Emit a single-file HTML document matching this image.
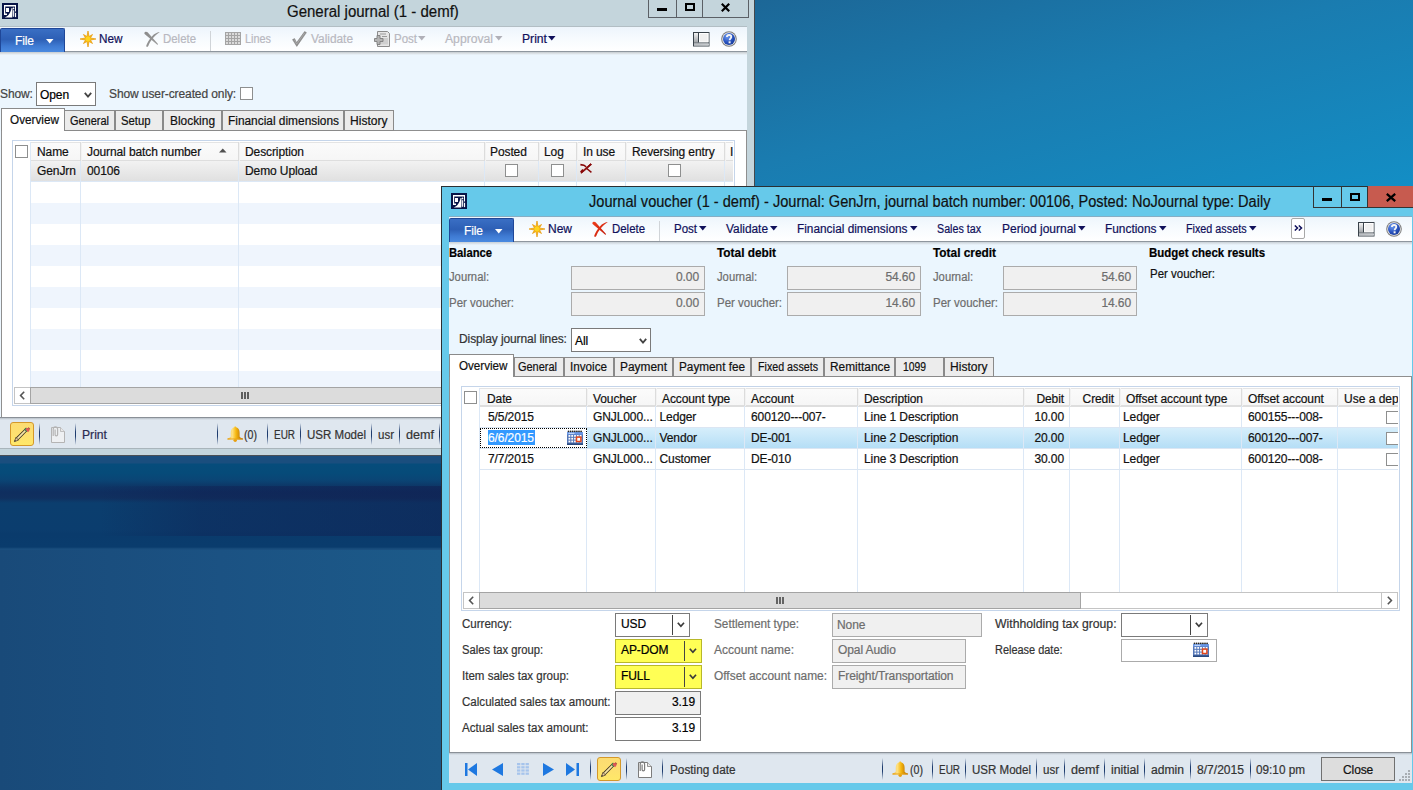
<!DOCTYPE html><html><head><meta charset="utf-8"><style>
html,body{margin:0;padding:0;}
body{width:1413px;height:790px;overflow:hidden;position:relative;font-family:"Liberation Sans",sans-serif;font-size:12px;}
div,span,svg{position:absolute;box-sizing:border-box;}
.t{white-space:nowrap;-webkit-text-stroke:0.2px currentColor;}
</style></head><body>
<div style="left:0;top:0;width:1413px;height:790px;background:#1a6a9c;"></div>
<div style="left:755px;top:0;width:658px;height:186px;background:linear-gradient(to bottom right,#1c6797 0%,#1a7cb0 45%,#138ec5 100%);"></div>
<div style="left:0;top:456px;width:441px;height:334px;background:linear-gradient(90deg,#194a79 0%,#1b5283 50%,#1c5a89 100%);"></div>
<div style="left:0;top:456px;width:441px;height:94px;background:linear-gradient(180deg,#1a4e7e 0px,#1a4e7e 7px,#064c7b 8px,#064b79 17px,#0a4575 24px,#0e3565 31px,#0f2e5f 36px,#10305f 42px,#0b3e6e 47px,#0b3d6e 74px,#0a3b6c 78px,#0a3c6d 91px,#1a4e7e 93px);"></div>
<div style="left:100px;top:486px;width:341px;height:50px;background:linear-gradient(90deg,rgba(16,30,80,0) 0%,rgba(16,30,80,0.35) 30%,rgba(16,30,80,0.5) 100%);"></div>
<div style="left:0px;top:0px;width:755px;height:456px;background:#c4d5dc;border-right:1px solid #45484c;border-bottom:1px solid #4a4f55;"></div>
<div style="left:0px;top:448px;width:747px;height:1px;background:#a9b5bb;"></div>
<svg style="left:2px;top:3px" width="16" height="16" viewBox="0 0 16 16"><rect width="16" height="16" fill="#071447"/><path d="M2 2H14V8.6H13V3.4H3.2V10.6H5V11.9H2Z" fill="#fff"/><rect x="4" y="5" width="3" height="4" fill="#fff"/><path d="M2.6 14.6C6 13.6 8.6 10.4 9.5 5.1L10.4 5.1C10.6 8.5 10.5 11.8 10.3 14.4Z" fill="#fff"/><circle cx="11.5" cy="5.4" r="0.85" fill="#fff"/><rect x="11.1" y="7.2" width="1.1" height="6.6" fill="#fff"/><rect x="13" y="9.8" width="1.1" height="4.3" fill="#fff"/></svg>
<span class="t" style="left:287px;top:4px;font-size:16px;line-height:16px;color:#111;transform:scaleX(0.9381);transform-origin:left top;">General journal (1 - demf)</span>
<div style="left:0px;top:26px;width:747px;height:1px;background:#b2bec4;"></div>
<div style="left:648px;top:0px;width:29px;height:18px;border:1px solid #5b6066;border-top:none;"></div>
<div style="left:676px;top:0px;width:27px;height:18px;border:1px solid #5b6066;border-top:none;"></div>
<div style="left:702px;top:0px;width:47px;height:18px;border:1px solid #5b6066;border-top:none;"></div>
<div style="left:657px;top:8px;width:10px;height:3px;background:#000;"></div>
<div style="left:685px;top:3px;width:10px;height:8px;border:2px solid #000;"></div>
<svg style="left:721px;top:3px" width="9" height="9" viewBox="0 0 9 9"><path d="M0.8 0.8L8.2 8.2M8.2 0.8L0.8 8.2" stroke="#000" stroke-width="2.2"/></svg>
<div style="left:0px;top:27px;width:747px;height:24px;background:linear-gradient(180deg,#edf5fc 0%,#f7fbfe 50%,#ffffff 100%);"></div>
<div style="left:0px;top:51px;width:747px;height:1px;background:#8e969e;"></div>
<div style="left:0px;top:28px;width:65px;height:24px;background:linear-gradient(180deg,#3a6fc4 0%,#2d5fb5 45%,#3f7bd3 75%,#4a8ae0 100%);border:1px solid #1f4798;border-bottom:none;border-radius:2px 2px 0 0;"></div>
<span class="t" style="left:15px;top:35px;font-size:12px;line-height:12px;color:#ffffff;letter-spacing:-0.1px;">File</span>
<svg style="left:46px;top:39px" width="8" height="5"><path d="M0 0H7.5L3.75 4.5Z" fill="#fff"/></svg>
<svg style="left:79px;top:30px" width="18" height="18" viewBox="-9 -9 18 18"><defs><radialGradient id="sg88" r="0.6"><stop offset="0" stop-color="#ffd820"/><stop offset="0.45" stop-color="#f6b612"/><stop offset="1" stop-color="#e58c00"/></radialGradient></defs><polygon points="0.00,-8.00 1.03,-2.49 4.53,-4.53 2.49,-1.03 8.00,0.00 2.49,1.03 4.53,4.53 1.03,2.49 0.00,8.00 -1.03,2.49 -4.53,4.53 -2.49,1.03 -8.00,0.00 -2.49,-1.03 -4.53,-4.53 -1.03,-2.49" fill="url(#sg88)" stroke="#e89a08" stroke-width="0.7" stroke-linejoin="round"/><circle r="2.4" fill="#ffd41c"/></svg>
<span class="t" style="left:99px;top:33px;font-size:12px;line-height:12px;color:#10105a;transform:scaleX(0.9785);transform-origin:left top;">New</span>
<svg style="left:144px;top:31px" width="17" height="17" viewBox="0 0 17 17"><defs><linearGradient id="xg144" x1="0" x2="1" y1="0" y2="1"><stop offset="0" stop-color="#8a8a8a"/><stop offset="1" stop-color="#9c9c9c"/></linearGradient></defs><path d="M0.4 1.9C1 0.5 2.6 0.6 3.6 1.3L14 12.9C14.1 13.6 13.4 13.9 13 13.4L0.9 3.3C0.4 2.9 0.3 2.4 0.4 1.9Z" fill="url(#xg144)"/><path d="M15.8 0.9C11 1.6 8 4.6 5.5 8.6C3.8 11.1 2.8 13.1 2.2 15.1C2.5 16.3 3.9 16.1 4.3 15.1C5.1 12.6 6.6 10.1 8.6 7.6C10.6 5.1 13.1 2.6 15.8 0.9Z" fill="url(#xg144)"/></svg>
<span class="t" style="left:163px;top:33px;font-size:12px;line-height:12px;color:#b8b8c0;transform:scaleX(0.9514);transform-origin:left top;">Delete</span>
<div style="left:210px;top:31px;width:1px;height:20px;background:#d0d4d8;"></div>
<svg style="left:225px;top:32px" width="16" height="13" viewBox="0 0 16 13"><rect width="16" height="13" fill="#a4a4a4"/><rect x="1" y="1" width="2" height="2" fill="#dadada"/><rect x="1" y="4" width="2" height="2" fill="#dadada"/><rect x="1" y="7" width="2" height="2" fill="#dadada"/><rect x="1" y="10" width="2" height="2" fill="#dadada"/><rect x="4" y="1" width="2" height="2" fill="#dadada"/><rect x="4" y="4" width="2" height="2" fill="#dadada"/><rect x="4" y="7" width="2" height="2" fill="#dadada"/><rect x="4" y="10" width="2" height="2" fill="#dadada"/><rect x="7" y="1" width="2" height="2" fill="#dadada"/><rect x="7" y="4" width="2" height="2" fill="#dadada"/><rect x="7" y="7" width="2" height="2" fill="#dadada"/><rect x="7" y="10" width="2" height="2" fill="#dadada"/><rect x="10" y="1" width="2" height="2" fill="#dadada"/><rect x="10" y="4" width="2" height="2" fill="#dadada"/><rect x="10" y="7" width="2" height="2" fill="#dadada"/><rect x="10" y="10" width="2" height="2" fill="#dadada"/><rect x="13" y="1" width="2" height="2" fill="#dadada"/><rect x="13" y="4" width="2" height="2" fill="#dadada"/><rect x="13" y="7" width="2" height="2" fill="#dadada"/><rect x="13" y="10" width="2" height="2" fill="#dadada"/></svg>
<span class="t" style="left:245px;top:33px;font-size:12px;line-height:12px;color:#b8b8c0;transform:scaleX(0.9063);transform-origin:left top;">Lines</span>
<svg style="left:292px;top:31px" width="15" height="16" viewBox="0 0 15 16"><path d="M0.5 8.6L2.6 7.6L4.6 11.6L12.6 0.6L14.4 1.6L4.8 15.4Z" fill="#8e8e8e" stroke="#7a7a7a" stroke-width="0.5"/><path d="M2.4 8.6L4.6 13.2L12.8 1.7" stroke="#b8b8b8" stroke-width="0.6" fill="none"/></svg>
<span class="t" style="left:311px;top:33px;font-size:12px;line-height:12px;color:#b8b8c0;transform:scaleX(0.9890);transform-origin:left top;">Validate</span>
<svg style="left:374px;top:31px" width="17" height="16" viewBox="0 0 17 16"><path d="M3.5 0.5H13.5L15.5 2.5V15.5H3.5Z" fill="#e6e6e6" stroke="#8c8c8c" stroke-width="1"/><path d="M6 3H12M8 5.5H13" stroke="#9a9a9a" stroke-width="1"/><rect x="6" y="7" width="8" height="6.5" fill="#cfcfcf"/><path d="M3 4.5H6V7.5H9V10.5H6V13.5H3V10.5H0.5V7.5H3Z" fill="#b4b4b4" stroke="#7e7e7e" stroke-width="0.9"/></svg>
<span class="t" style="left:394px;top:33px;font-size:12px;line-height:12px;color:#b8b8c0;transform:scaleX(0.9583);transform-origin:left top;">Post</span>
<svg style="left:418px;top:36px" width="8" height="5"><path d="M0 0H7.5L3.75 4.5Z" fill="#b0b0b8"/></svg>
<span class="t" style="left:445px;top:33px;font-size:12px;line-height:12px;color:#b8b8c0;transform:scaleX(1.0135);transform-origin:left top;">Approval</span>
<svg style="left:495px;top:36px" width="8" height="5"><path d="M0 0H7.5L3.75 4.5Z" fill="#b0b0b8"/></svg>
<span class="t" style="left:522px;top:33px;font-size:12px;line-height:12px;color:#10105a;transform:scaleX(1.0133);transform-origin:left top;">Print</span>
<svg style="left:548px;top:36px" width="8" height="5"><path d="M0 0H7.5L3.75 4.5Z" fill="#10105a"/></svg>
<svg style="left:693px;top:32px" width="17" height="15" viewBox="0 0 17 15"><defs><linearGradient id="lg693" x1="0" x2="0" y1="0" y2="1"><stop offset="0" stop-color="#f4f4f4"/><stop offset="1" stop-color="#9ea2a6"/></linearGradient><linearGradient id="lh693" x1="0" x2="1"><stop offset="0" stop-color="#b8bcc0"/><stop offset="1" stop-color="#c8ccd0"/></linearGradient></defs><rect x="0.5" y="0.5" width="15.5" height="13.5" fill="#f2f2f2" stroke="#39424a" stroke-width="1"/><rect x="1" y="1" width="4" height="9.5" fill="url(#lg693)"/><rect x="5" y="1" width="1" height="9.5" fill="#39424a"/><rect x="6" y="1" width="9.5" height="9.5" fill="#fff"/><rect x="7" y="2" width="7.5" height="7.5" fill="#f0f0f0"/><rect x="1" y="10.5" width="15" height="1" fill="#39424a"/><rect x="1" y="11.5" width="15" height="2" fill="url(#lh693)"/></svg>
<svg style="left:721px;top:31px" width="16" height="16" viewBox="0 0 16 16"><defs><radialGradient id="hg729" cx="0.35" cy="0.3" r="0.75"><stop offset="0" stop-color="#6f9cf0"/><stop offset="0.6" stop-color="#2a54c0"/><stop offset="1" stop-color="#163a9a"/></radialGradient></defs><circle cx="8" cy="8" r="7.8" fill="#7c7c7c"/><circle cx="8" cy="8" r="6.8" fill="#ececec"/><circle cx="8" cy="8" r="6" fill="url(#hg729)"/><path d="M5.9 6.1C5.9 4.7 6.8 4 8.1 4C9.4 4 10.3 4.8 10.3 5.9C10.3 7.2 8.6 7.5 8.6 9.3" stroke="#f4f4f4" stroke-width="1.8" fill="none"/><rect x="7.6" y="10.3" width="2" height="2" fill="#f4f4f4"/></svg>
<div style="left:0px;top:52px;width:747px;height:366px;background:#ecf6fe;"></div>
<div style="left:0px;top:52px;width:747px;height:3px;background:linear-gradient(180deg,#c6cbcf,#dfe5ea 60%,#ebf5fd);"></div>
<span class="t" style="left:0px;top:88px;font-size:12px;line-height:12px;color:#444;letter-spacing:-0.1px;">Show:</span>
<div style="left:36px;top:82px;width:60px;height:24px;background:#fff;border:1px solid #7a7a7a;"></div>
<span class="t" style="left:40px;top:89px;font-size:12px;line-height:12px;color:#000;letter-spacing:-0.1px;">Open</span>
<svg style="left:84px;top:92px" width="8" height="6"><path d="M0.8 0.8L4 4.5L7.2 0.8" stroke="#444" stroke-width="1.8" fill="none"/></svg>
<span class="t" style="left:109px;top:88px;font-size:12px;line-height:12px;color:#444;letter-spacing:-0.1px;">Show user-created only:</span>
<div style="left:240px;top:87px;width:13px;height:13px;background:#fff;border:1px solid #8e8f8f;"></div>
<div style="left:1px;top:130px;width:746px;height:288px;background:#fff;border:1px solid #8f8f8f;border-right:none;border-bottom:none;"></div>
<div style="left:746px;top:130px;width:1px;height:288px;background:#8f8f8f;"></div>
<div style="left:64px;top:110px;width:51px;height:21px;background:#ececec;border:1px solid #8a8a8a;"></div>
<span class="t" style="left:69.5px;top:115px;font-size:12px;line-height:12px;color:#111;transform:scaleX(0.9136);transform-origin:left top;">General</span>
<div style="left:115px;top:110px;width:48px;height:21px;background:#ececec;border:1px solid #8a8a8a;"></div>
<span class="t" style="left:121px;top:115px;font-size:12px;line-height:12px;color:#111;transform:scaleX(0.9412);transform-origin:left top;">Setup</span>
<div style="left:163px;top:110px;width:59px;height:21px;background:#ececec;border:1px solid #8a8a8a;"></div>
<span class="t" style="left:169.5px;top:115px;font-size:12px;line-height:12px;color:#111;transform:scaleX(0.9921);transform-origin:left top;">Blocking</span>
<div style="left:222px;top:110px;width:122px;height:21px;background:#ececec;border:1px solid #8a8a8a;"></div>
<span class="t" style="left:227.5px;top:115px;font-size:12px;line-height:12px;color:#111;transform:scaleX(0.9905);transform-origin:left top;">Financial dimensions</span>
<div style="left:344px;top:110px;width:50px;height:21px;background:#ececec;border:1px solid #8a8a8a;"></div>
<span class="t" style="left:350px;top:115px;font-size:12px;line-height:12px;color:#111;transform:scaleX(1.0042);transform-origin:left top;">History</span>
<div style="left:1px;top:108px;width:64px;height:23px;background:#fff;border:1px solid #8a8a8a;border-bottom:none;"></div>
<span class="t" style="left:10px;top:114px;font-size:12px;line-height:12px;color:#111;transform:scaleX(0.9797);transform-origin:left top;">Overview</span>
<div style="left:12px;top:140px;width:723px;height:266px;background:#fff;border:1px solid #c5d5ea;"></div>
<div style="left:31px;top:142px;width:702px;height:20px;background:linear-gradient(180deg,#fbfbfb,#f6f6f6);border-top:1px solid #e4e4e4;border-bottom:2px solid #dedede;"></div>
<div style="left:15px;top:145px;width:13px;height:13px;background:#fff;border:1px solid #8e8f8f;"></div>
<div style="left:80px;top:142px;width:2px;height:19px;background:#f2f2f2;border-left:1px solid #dcdcdc;"></div>
<div style="left:238px;top:142px;width:2px;height:19px;background:#f2f2f2;border-left:1px solid #dcdcdc;"></div>
<div style="left:484px;top:142px;width:2px;height:19px;background:#f2f2f2;border-left:1px solid #dcdcdc;"></div>
<div style="left:538px;top:142px;width:2px;height:19px;background:#f2f2f2;border-left:1px solid #dcdcdc;"></div>
<div style="left:576px;top:142px;width:2px;height:19px;background:#f2f2f2;border-left:1px solid #dcdcdc;"></div>
<div style="left:625px;top:142px;width:2px;height:19px;background:#f2f2f2;border-left:1px solid #dcdcdc;"></div>
<div style="left:724px;top:142px;width:2px;height:19px;background:#f2f2f2;border-left:1px solid #dcdcdc;"></div>
<span class="t" style="left:37px;top:146px;font-size:12px;line-height:12px;color:#111;letter-spacing:-0.1px;">Name</span>
<span class="t" style="left:87px;top:146px;font-size:12px;line-height:12px;color:#111;letter-spacing:-0.1px;">Journal batch number</span>
<svg style="left:219px;top:148px" width="8" height="5"><path d="M0 4.5H7.5L3.75 0.5Z" fill="#505050"/></svg>
<span class="t" style="left:245px;top:146px;font-size:12px;line-height:12px;color:#111;letter-spacing:-0.1px;">Description</span>
<span class="t" style="left:490px;top:146px;font-size:12px;line-height:12px;color:#111;letter-spacing:-0.1px;">Posted</span>
<span class="t" style="left:544px;top:146px;font-size:12px;line-height:12px;color:#111;letter-spacing:-0.1px;">Log</span>
<span class="t" style="left:583px;top:146px;font-size:12px;line-height:12px;color:#111;letter-spacing:-0.1px;">In use</span>
<span class="t" style="left:632px;top:146px;font-size:12px;line-height:12px;color:#111;letter-spacing:-0.1px;">Reversing entry</span>
<span class="t" style="left:730px;top:146px;font-size:12px;line-height:12px;color:#111;letter-spacing:-0.1px;">I</span>
<div style="left:31px;top:161px;width:702px;height:20px;background:linear-gradient(180deg,#f2f2f2,#e0e0e0);"></div>
<div style="left:31px;top:181px;width:702px;height:1px;background:#dce8f6;"></div>
<div style="left:31px;top:182px;width:702px;height:21px;background:#ffffff;"></div>
<div style="left:31px;top:203px;width:702px;height:21px;background:#eff5fd;"></div>
<div style="left:31px;top:224px;width:702px;height:21px;background:#ffffff;"></div>
<div style="left:31px;top:245px;width:702px;height:21px;background:#eff5fd;"></div>
<div style="left:31px;top:266px;width:702px;height:21px;background:#ffffff;"></div>
<div style="left:31px;top:287px;width:702px;height:21px;background:#eff5fd;"></div>
<div style="left:31px;top:308px;width:702px;height:21px;background:#ffffff;"></div>
<div style="left:31px;top:329px;width:702px;height:21px;background:#eff5fd;"></div>
<div style="left:31px;top:350px;width:702px;height:21px;background:#ffffff;"></div>
<div style="left:31px;top:371px;width:702px;height:21px;background:#eff5fd;"></div>
<div style="left:30px;top:142px;width:1px;height:245px;background:#dce8f6;"></div>
<div style="left:80px;top:161px;width:1px;height:226px;background:#dce8f6;"></div>
<div style="left:238px;top:161px;width:1px;height:226px;background:#dce8f6;"></div>
<div style="left:484px;top:161px;width:1px;height:226px;background:#dce8f6;"></div>
<div style="left:538px;top:161px;width:1px;height:226px;background:#dce8f6;"></div>
<div style="left:576px;top:161px;width:1px;height:226px;background:#dce8f6;"></div>
<div style="left:625px;top:161px;width:1px;height:226px;background:#dce8f6;"></div>
<div style="left:724px;top:161px;width:1px;height:226px;background:#dce8f6;"></div>
<span class="t" style="left:37px;top:165px;font-size:12px;line-height:12px;color:#111;letter-spacing:-0.1px;">GenJrn</span>
<span class="t" style="left:87px;top:165px;font-size:12px;line-height:12px;color:#111;letter-spacing:-0.1px;">00106</span>
<span class="t" style="left:245px;top:165px;font-size:12px;line-height:12px;color:#111;letter-spacing:-0.1px;">Demo Upload</span>
<div style="left:505px;top:164px;width:13px;height:13px;background:#fff;border:1px solid #8e8f8f;"></div>
<div style="left:551px;top:164px;width:13px;height:13px;background:#fff;border:1px solid #8e8f8f;"></div>
<svg style="left:580px;top:163px" width="13" height="11" viewBox="0 0 13 11"><path d="M0.8 9.6L1.6 10.2L11.6 1.6L10.6 0.6Z" fill="#880808" stroke="#880808" stroke-width="0.8" stroke-linejoin="round"/><path d="M0.4 1.6L3.8 2.2L6.2 3.8" stroke="#880808" stroke-width="1.6" fill="none"/><path d="M6.4 5.2L11.4 9.4" stroke="#880808" stroke-width="1.4" fill="none"/><path d="M0.8 9.2L3.2 6.8" stroke="#880808" stroke-width="2.2"/></svg>
<div style="left:668px;top:164px;width:13px;height:13px;background:#fff;border:1px solid #8e8f8f;"></div>
<div style="left:14px;top:387px;width:17px;height:17px;background:#fff;border:1px solid #c4c4c4;"></div>
<div style="left:30px;top:387px;width:705px;height:17px;background:#dcdcdc;border:1px solid #a4a4a4;"></div>
<svg style="left:19px;top:391px" width="7" height="9" viewBox="0 0 7 9"><path d="M5.2 0.8L1.6 4.5L5.2 8.2" stroke="#555" stroke-width="1.6" fill="none"/></svg>
<div style="left:241px;top:392px;width:2px;height:7px;background:#5e5e5e;"></div>
<div style="left:244px;top:392px;width:2px;height:7px;background:#5e5e5e;"></div>
<div style="left:247px;top:392px;width:2px;height:7px;background:#5e5e5e;"></div>
<div style="left:0px;top:418px;width:747px;height:30px;background:#dfe7ef;"></div>
<div style="left:0px;top:417px;width:747px;height:1px;background:#8a9097;"></div>
<div style="left:0px;top:418px;width:747px;height:2px;background:linear-gradient(180deg,#b8c0c8,#dfe7ef);"></div>
<div style="left:10px;top:422px;width:24px;height:24px;background:linear-gradient(180deg,#fcdc72 0%,#fee070 50%,#ffe868 100%);border:1px solid #d4982a;border-radius:3px;"></div>
<svg style="left:13px;top:425px" width="18" height="18" viewBox="0 0 18 18"><path d="M4.2 13.8L13.6 4.4" stroke="#3c3020" stroke-width="3.4" stroke-linecap="butt"/><path d="M4.2 13.8L13.6 4.4" stroke="#f8e6a8" stroke-width="1.8"/><path d="M1.4 16.6L2.9 12.4L5.6 15.1Z" fill="#e8c8a0" stroke="#3c3020" stroke-width="0.7" stroke-linejoin="round"/><path d="M1.4 16.6L1.9 15L3 16.1Z" fill="#222"/><path d="M12.2 5.8L14.2 3.8" stroke="#2a8a4a" stroke-width="3.4"/><path d="M13.6 4.4L14.8 3.2C15.3 2.7 15.9 2.7 16.3 3.1C16.7 3.5 16.7 4.1 16.2 4.6L15 5.8Z" fill="#e05858" stroke="#8a3030" stroke-width="0.6"/><path d="M13 3.6L15.8 6.4" stroke="#e05858" stroke-width="2.2"/></svg>
<div style="left:39px;top:423px;width:1px;height:22px;background:linear-gradient(180deg,rgba(30,60,110,0) 0%,#1e3c6e 40%,#1e3c6e 60%,rgba(30,60,110,0) 100%);"></div>
<svg style="left:51px;top:426px" width="14" height="17" viewBox="0 0 14 17"><path d="M0.5 1.5H9.5L13.5 5.5V16.5H0.5Z" fill="#eef0f2" stroke="#b4b4b4" stroke-width="1"/><path d="M9.5 1.5V5.5H13.5" fill="#e8e8e8" stroke="#b4b4b4" stroke-width="0.8"/><path d="M2.2 10V3.2C2.2 1.7 3 0.8 4.4 0.8C5.8 0.8 6.6 1.7 6.6 3.2V8.4C6.6 9.3 6.1 9.8 5.3 9.8C4.5 9.8 4.1 9.3 4.1 8.4V3.6" fill="none" stroke="#b4b4b4" stroke-width="1.2"/></svg>
<div style="left:75px;top:423px;width:1px;height:22px;background:linear-gradient(180deg,rgba(30,60,110,0) 0%,#1e3c6e 40%,#1e3c6e 60%,rgba(30,60,110,0) 100%);"></div>
<span class="t" style="left:82px;top:429px;font-size:12px;line-height:12px;color:#2a2a50;transform:scaleX(1.0133);transform-origin:left top;">Print</span>
<div style="left:217px;top:423px;width:1px;height:22px;background:linear-gradient(180deg,rgba(30,60,110,0) 0%,#1e3c6e 40%,#1e3c6e 60%,rgba(30,60,110,0) 100%);"></div>
<div style="left:267px;top:423px;width:1px;height:22px;background:linear-gradient(180deg,rgba(30,60,110,0) 0%,#1e3c6e 40%,#1e3c6e 60%,rgba(30,60,110,0) 100%);"></div>
<div style="left:300px;top:423px;width:1px;height:22px;background:linear-gradient(180deg,rgba(30,60,110,0) 0%,#1e3c6e 40%,#1e3c6e 60%,rgba(30,60,110,0) 100%);"></div>
<div style="left:371px;top:423px;width:1px;height:22px;background:linear-gradient(180deg,rgba(30,60,110,0) 0%,#1e3c6e 40%,#1e3c6e 60%,rgba(30,60,110,0) 100%);"></div>
<div style="left:399px;top:423px;width:1px;height:22px;background:linear-gradient(180deg,rgba(30,60,110,0) 0%,#1e3c6e 40%,#1e3c6e 60%,rgba(30,60,110,0) 100%);"></div>
<div style="left:439px;top:423px;width:1px;height:22px;background:linear-gradient(180deg,rgba(30,60,110,0) 0%,#1e3c6e 40%,#1e3c6e 60%,rgba(30,60,110,0) 100%);"></div>
<svg style="left:227px;top:426px" width="17" height="16" viewBox="0 0 17 16"><defs><linearGradient id="bg227" x1="0" x2="1"><stop offset="0" stop-color="#e8a010"/><stop offset="0.3" stop-color="#ffe48a"/><stop offset="0.55" stop-color="#f6b810"/><stop offset="1" stop-color="#a85a00"/></linearGradient></defs><circle cx="8.2" cy="14.2" r="1.7" fill="#e8a010"/><path d="M8.2 0.4C9 0.4 9.2 1 9.2 1.3C11.6 1.9 12.6 4 12.6 6.8V10.2C12.6 11.2 13.6 11.9 15.8 12.4C16.3 12.6 16.2 13.6 15.6 13.6H0.8C0.2 13.6 0.1 12.6 0.6 12.4C2.8 11.9 3.8 11.2 3.8 10.2V6.8C3.8 4 4.8 1.9 7.2 1.3C7.2 1 7.4 0.4 8.2 0.4Z" fill="url(#bg227)"/><path d="M0.8 12.4H15.6V13.6H0.8Z" fill="#e8a418" opacity="0.8"/></svg>
<span class="t" style="left:244px;top:429px;font-size:12px;line-height:12px;color:#333;transform:scaleX(0.8860);transform-origin:left top;">(0)</span>
<span class="t" style="left:274px;top:429px;font-size:12px;line-height:12px;color:#333;transform:scaleX(0.8286);transform-origin:left top;">EUR</span>
<span class="t" style="left:307px;top:429px;font-size:12px;line-height:12px;color:#333;transform:scaleX(0.9615);transform-origin:left top;">USR Model</span>
<span class="t" style="left:378px;top:429px;font-size:12px;line-height:12px;color:#333;transform:scaleX(0.9597);transform-origin:left top;">usr</span>
<span class="t" style="left:406px;top:429px;font-size:12px;line-height:12px;color:#333;transform:scaleX(1.0498);transform-origin:left top;">demf</span>
<div style="left:441px;top:186px;width:980px;height:610px;background:#66c9ea;border:1px solid #2a2f33;border-right:none;border-bottom:none;"></div>
<svg style="left:451px;top:193px" width="16" height="16" viewBox="0 0 16 16"><rect width="16" height="16" fill="#071447"/><path d="M2 2H14V8.6H13V3.4H3.2V10.6H5V11.9H2Z" fill="#fff"/><rect x="4" y="5" width="3" height="4" fill="#fff"/><path d="M2.6 14.6C6 13.6 8.6 10.4 9.5 5.1L10.4 5.1C10.6 8.5 10.5 11.8 10.3 14.4Z" fill="#fff"/><circle cx="11.5" cy="5.4" r="0.85" fill="#fff"/><rect x="11.1" y="7.2" width="1.1" height="6.6" fill="#fff"/><rect x="13" y="9.8" width="1.1" height="4.3" fill="#fff"/></svg>
<span class="t" style="left:589px;top:194px;font-size:16px;line-height:16px;color:#111;transform:scaleX(0.9111);transform-origin:left top;">Journal voucher (1 - demf) - Journal: GenJrn, journal batch number: 00106, Posted: NoJournal type: Daily</span>
<div style="left:1313px;top:186px;width:29px;height:22px;border:1px solid #333;border-top:none;"></div>
<div style="left:1341px;top:186px;width:27px;height:22px;border:1px solid #333;border-top:none;"></div>
<div style="left:1367px;top:186px;width:60px;height:22px;background:#c75b4f;border:1px solid #333;border-top:none;"></div>
<div style="left:1322px;top:198px;width:10px;height:3px;background:#000;"></div>
<div style="left:1350px;top:193px;width:10px;height:8px;border:2px solid #000;"></div>
<svg style="left:1386px;top:193px" width="10" height="9" viewBox="0 0 10 9"><path d="M0.8 0.8L9.2 8.2M9.2 0.8L0.8 8.2" stroke="#000" stroke-width="2.2"/></svg>
<div style="left:449px;top:216px;width:963px;height:25px;background:linear-gradient(180deg,#edf5fc 0%,#f7fbfe 50%,#ffffff 100%);"></div>
<div style="left:449px;top:216px;width:963px;height:1px;background:#86aec4;"></div>
<div style="left:449px;top:241px;width:963px;height:1px;background:#8e969e;"></div>
<div style="left:449px;top:218px;width:65px;height:24px;background:linear-gradient(180deg,#3a6fc4 0%,#2d5fb5 45%,#3f7bd3 75%,#4a8ae0 100%);border:1px solid #1f4798;border-bottom:none;border-radius:2px 2px 0 0;"></div>
<span class="t" style="left:464px;top:225px;font-size:12px;line-height:12px;color:#ffffff;letter-spacing:-0.1px;">File</span>
<svg style="left:495px;top:229px" width="8" height="5"><path d="M0 0H7.5L3.75 4.5Z" fill="#fff"/></svg>
<svg style="left:528px;top:220px" width="18" height="18" viewBox="-9 -9 18 18"><defs><radialGradient id="sg537" r="0.6"><stop offset="0" stop-color="#ffd820"/><stop offset="0.45" stop-color="#f6b612"/><stop offset="1" stop-color="#e58c00"/></radialGradient></defs><polygon points="0.00,-8.00 1.03,-2.49 4.53,-4.53 2.49,-1.03 8.00,0.00 2.49,1.03 4.53,4.53 1.03,2.49 0.00,8.00 -1.03,2.49 -4.53,4.53 -2.49,1.03 -8.00,0.00 -2.49,-1.03 -4.53,-4.53 -1.03,-2.49" fill="url(#sg537)" stroke="#e89a08" stroke-width="0.7" stroke-linejoin="round"/><circle r="2.4" fill="#ffd41c"/></svg>
<span class="t" style="left:548px;top:223px;font-size:12px;line-height:12px;color:#10105a;transform:scaleX(0.9993);transform-origin:left top;">New</span>
<svg style="left:592px;top:221px" width="17" height="17" viewBox="0 0 17 17"><defs><linearGradient id="xg592" x1="0" x2="1" y1="0" y2="1"><stop offset="0" stop-color="#f0401c"/><stop offset="1" stop-color="#c01808"/></linearGradient></defs><path d="M0.4 1.9C1 0.5 2.6 0.6 3.6 1.3L14 12.9C14.1 13.6 13.4 13.9 13 13.4L0.9 3.3C0.4 2.9 0.3 2.4 0.4 1.9Z" fill="url(#xg592)"/><path d="M15.8 0.9C11 1.6 8 4.6 5.5 8.6C3.8 11.1 2.8 13.1 2.2 15.1C2.5 16.3 3.9 16.1 4.3 15.1C5.1 12.6 6.6 10.1 8.6 7.6C10.6 5.1 13.1 2.6 15.8 0.9Z" fill="url(#xg592)"/></svg>
<span class="t" style="left:612px;top:223px;font-size:12px;line-height:12px;color:#10105a;transform:scaleX(0.9514);transform-origin:left top;">Delete</span>
<div style="left:659px;top:221px;width:1px;height:20px;background:#d0d4d8;"></div>
<span class="t" style="left:674px;top:223px;font-size:12px;line-height:12px;color:#10105a;transform:scaleX(0.9583);transform-origin:left top;">Post</span>
<svg style="left:699px;top:226px" width="8" height="5"><path d="M0 0H7.5L3.75 4.5Z" fill="#10105a"/></svg>
<span class="t" style="left:726px;top:223px;font-size:12px;line-height:12px;color:#10105a;transform:scaleX(0.9890);transform-origin:left top;">Validate</span>
<svg style="left:770px;top:226px" width="8" height="5"><path d="M0 0H7.5L3.75 4.5Z" fill="#10105a"/></svg>
<span class="t" style="left:797px;top:223px;font-size:12px;line-height:12px;color:#10105a;transform:scaleX(0.9861);transform-origin:left top;">Financial dimensions</span>
<svg style="left:910px;top:226px" width="8" height="5"><path d="M0 0H7.5L3.75 4.5Z" fill="#10105a"/></svg>
<span class="t" style="left:937px;top:223px;font-size:12px;line-height:12px;color:#10105a;transform:scaleX(0.8917);transform-origin:left top;">Sales tax</span>
<span class="t" style="left:1002px;top:223px;font-size:12px;line-height:12px;color:#10105a;transform:scaleX(0.9994);transform-origin:left top;">Period journal</span>
<svg style="left:1078px;top:226px" width="8" height="5"><path d="M0 0H7.5L3.75 4.5Z" fill="#10105a"/></svg>
<span class="t" style="left:1105px;top:223px;font-size:12px;line-height:12px;color:#10105a;transform:scaleX(0.9901);transform-origin:left top;">Functions</span>
<svg style="left:1159px;top:226px" width="8" height="5"><path d="M0 0H7.5L3.75 4.5Z" fill="#10105a"/></svg>
<span class="t" style="left:1186px;top:223px;font-size:12px;line-height:12px;color:#10105a;transform:scaleX(0.8984);transform-origin:left top;">Fixed assets</span>
<svg style="left:1249px;top:226px" width="8" height="5"><path d="M0 0H7.5L3.75 4.5Z" fill="#10105a"/></svg>
<div style="left:1291px;top:218px;width:14px;height:21px;background:#fff;border:1px solid #a8a8a8;border-radius:2px;"></div>
<svg style="left:1294px;top:225px" width="9" height="6" viewBox="0 0 9 6"><path d="M0.8 0.5L3.5 3L0.8 5.5M4.8 0.5L7.5 3L4.8 5.5" stroke="#10105a" stroke-width="1.5" fill="none"/></svg>
<svg style="left:1358px;top:222px" width="17" height="15" viewBox="0 0 17 15"><defs><linearGradient id="lg1358" x1="0" x2="0" y1="0" y2="1"><stop offset="0" stop-color="#f4f4f4"/><stop offset="1" stop-color="#9ea2a6"/></linearGradient><linearGradient id="lh1358" x1="0" x2="1"><stop offset="0" stop-color="#b8bcc0"/><stop offset="1" stop-color="#c8ccd0"/></linearGradient></defs><rect x="0.5" y="0.5" width="15.5" height="13.5" fill="#f2f2f2" stroke="#39424a" stroke-width="1"/><rect x="1" y="1" width="4" height="9.5" fill="url(#lg1358)"/><rect x="5" y="1" width="1" height="9.5" fill="#39424a"/><rect x="6" y="1" width="9.5" height="9.5" fill="#fff"/><rect x="7" y="2" width="7.5" height="7.5" fill="#f0f0f0"/><rect x="1" y="10.5" width="15" height="1" fill="#39424a"/><rect x="1" y="11.5" width="15" height="2" fill="url(#lh1358)"/></svg>
<svg style="left:1386px;top:221px" width="16" height="16" viewBox="0 0 16 16"><defs><radialGradient id="hg1394" cx="0.35" cy="0.3" r="0.75"><stop offset="0" stop-color="#6f9cf0"/><stop offset="0.6" stop-color="#2a54c0"/><stop offset="1" stop-color="#163a9a"/></radialGradient></defs><circle cx="8" cy="8" r="7.8" fill="#7c7c7c"/><circle cx="8" cy="8" r="6.8" fill="#ececec"/><circle cx="8" cy="8" r="6" fill="url(#hg1394)"/><path d="M5.9 6.1C5.9 4.7 6.8 4 8.1 4C9.4 4 10.3 4.8 10.3 5.9C10.3 7.2 8.6 7.5 8.6 9.3" stroke="#f4f4f4" stroke-width="1.8" fill="none"/><rect x="7.6" y="10.3" width="2" height="2" fill="#f4f4f4"/></svg>
<div style="left:449px;top:242px;width:963px;height:510px;background:#ebf6fe;"></div>
<div style="left:449px;top:242px;width:963px;height:3px;background:linear-gradient(180deg,#c9d0d6,#ebf5fd);"></div>
<span class="t" style="left:449px;top:247px;font-size:12px;line-height:12px;color:#000;font-weight:bold;transform:scaleX(0.9345);transform-origin:left top;">Balance</span>
<span class="t" style="left:449px;top:271px;font-size:12px;line-height:12px;color:#6d6d6d;transform:scaleX(0.9370);transform-origin:left top;">Journal:</span>
<span class="t" style="left:449px;top:297px;font-size:12px;line-height:12px;color:#6d6d6d;transform:scaleX(0.9557);transform-origin:left top;">Per voucher:</span>
<div style="left:571px;top:266px;width:134px;height:24px;background:#f0f0f0;border:1px solid #ababab;"></div>
<span class="t" style="right:714px;top:271px;font-size:12px;line-height:12px;color:#6d6d6d;letter-spacing:-0.1px;">0.00</span>
<div style="left:571px;top:292px;width:134px;height:24px;background:#f0f0f0;border:1px solid #ababab;"></div>
<span class="t" style="right:714px;top:297px;font-size:12px;line-height:12px;color:#6d6d6d;letter-spacing:-0.1px;">0.00</span>
<span class="t" style="left:717px;top:247px;font-size:12px;line-height:12px;color:#000;font-weight:bold;transform:scaleX(0.9874);transform-origin:left top;">Total debit</span>
<span class="t" style="left:717px;top:271px;font-size:12px;line-height:12px;color:#6d6d6d;transform:scaleX(0.9370);transform-origin:left top;">Journal:</span>
<span class="t" style="left:717px;top:297px;font-size:12px;line-height:12px;color:#6d6d6d;transform:scaleX(0.9557);transform-origin:left top;">Per voucher:</span>
<div style="left:787px;top:266px;width:134px;height:24px;background:#f0f0f0;border:1px solid #ababab;"></div>
<span class="t" style="right:498px;top:271px;font-size:12px;line-height:12px;color:#6d6d6d;letter-spacing:-0.1px;">54.60</span>
<div style="left:787px;top:292px;width:134px;height:24px;background:#f0f0f0;border:1px solid #ababab;"></div>
<span class="t" style="right:498px;top:297px;font-size:12px;line-height:12px;color:#6d6d6d;letter-spacing:-0.1px;">14.60</span>
<span class="t" style="left:933px;top:247px;font-size:12px;line-height:12px;color:#000;font-weight:bold;transform:scaleX(0.9880);transform-origin:left top;">Total credit</span>
<span class="t" style="left:933px;top:271px;font-size:12px;line-height:12px;color:#6d6d6d;transform:scaleX(0.9370);transform-origin:left top;">Journal:</span>
<span class="t" style="left:933px;top:297px;font-size:12px;line-height:12px;color:#6d6d6d;transform:scaleX(0.9557);transform-origin:left top;">Per voucher:</span>
<div style="left:1003px;top:266px;width:134px;height:24px;background:#f0f0f0;border:1px solid #ababab;"></div>
<span class="t" style="right:282px;top:271px;font-size:12px;line-height:12px;color:#6d6d6d;letter-spacing:-0.1px;">54.60</span>
<div style="left:1003px;top:292px;width:134px;height:24px;background:#f0f0f0;border:1px solid #ababab;"></div>
<span class="t" style="right:282px;top:297px;font-size:12px;line-height:12px;color:#6d6d6d;letter-spacing:-0.1px;">14.60</span>
<span class="t" style="left:1149px;top:247px;font-size:12px;line-height:12px;color:#000;font-weight:bold;transform:scaleX(0.9560);transform-origin:left top;">Budget check results</span>
<span class="t" style="left:1149.5px;top:268px;font-size:12px;line-height:12px;color:#111;transform:scaleX(0.9557);transform-origin:left top;">Per voucher:</span>
<span class="t" style="left:459px;top:333px;font-size:12px;line-height:12px;color:#333;letter-spacing:-0.1px;">Display journal lines:</span>
<div style="left:571px;top:328px;width:80px;height:24px;background:#fff;border:1px solid #7a7a7a;"></div>
<span class="t" style="left:575px;top:335px;font-size:12px;line-height:12px;color:#000;letter-spacing:-0.1px;">All</span>
<svg style="left:639px;top:338px" width="8" height="6"><path d="M0.8 0.8L4 4.5L7.2 0.8" stroke="#444" stroke-width="1.8" fill="none"/></svg>
<div style="left:449px;top:376px;width:963px;height:376px;background:#fff;border-top:1px solid #8f8f8f;border-left:1px solid #8f8f8f;border-right:1px solid #8f8f8f;"></div>
<div style="left:514px;top:357px;width:50px;height:20px;background:#ececec;border:1px solid #8a8a8a;"></div>
<span class="t" style="left:518.2px;top:361px;font-size:12px;line-height:12px;color:#111;transform:scaleX(0.9136);transform-origin:left top;">General</span>
<div style="left:564px;top:357px;width:50px;height:20px;background:#ececec;border:1px solid #8a8a8a;"></div>
<span class="t" style="left:570.4px;top:361px;font-size:12px;line-height:12px;color:#111;transform:scaleX(0.9733);transform-origin:left top;">Invoice</span>
<div style="left:614px;top:357px;width:59px;height:20px;background:#ececec;border:1px solid #8a8a8a;"></div>
<span class="t" style="left:620px;top:361px;font-size:12px;line-height:12px;color:#111;transform:scaleX(0.9927);transform-origin:left top;">Payment</span>
<div style="left:673px;top:357px;width:78px;height:20px;background:#ececec;border:1px solid #8a8a8a;"></div>
<span class="t" style="left:679.4px;top:361px;font-size:12px;line-height:12px;color:#111;transform:scaleX(0.9800);transform-origin:left top;">Payment fee</span>
<div style="left:751px;top:357px;width:73px;height:20px;background:#ececec;border:1px solid #8a8a8a;"></div>
<span class="t" style="left:757.6px;top:361px;font-size:12px;line-height:12px;color:#111;transform:scaleX(0.8910);transform-origin:left top;">Fixed assets</span>
<div style="left:824px;top:357px;width:71px;height:20px;background:#ececec;border:1px solid #8a8a8a;"></div>
<span class="t" style="left:830.2px;top:361px;font-size:12px;line-height:12px;color:#111;transform:scaleX(0.9887);transform-origin:left top;">Remittance</span>
<div style="left:895px;top:357px;width:49px;height:20px;background:#ececec;border:1px solid #8a8a8a;"></div>
<span class="t" style="left:903px;top:361px;font-size:12px;line-height:12px;color:#111;transform:scaleX(0.8618);transform-origin:left top;">1099</span>
<div style="left:944px;top:357px;width:50px;height:20px;background:#ececec;border:1px solid #8a8a8a;"></div>
<span class="t" style="left:950px;top:361px;font-size:12px;line-height:12px;color:#111;transform:scaleX(1.0042);transform-origin:left top;">History</span>
<div style="left:449px;top:354px;width:65px;height:23px;background:#fff;border:1px solid #8a8a8a;border-bottom:none;"></div>
<span class="t" style="left:459px;top:360px;font-size:12px;line-height:12px;color:#111;transform:scaleX(0.9697);transform-origin:left top;">Overview</span>
<div style="left:461px;top:386px;width:939px;height:225px;background:#fff;border:1px solid #c5d5ea;"></div>
<div style="left:480px;top:388px;width:918px;height:19px;background:linear-gradient(180deg,#fbfbfb,#f6f6f6);border-top:1px solid #e4e4e4;border-bottom:2px solid #dedede;"></div>
<div style="left:464px;top:391px;width:13px;height:13px;background:#fff;border:1px solid #8e8f8f;"></div>
<div style="left:586px;top:388px;width:2px;height:18px;background:#f2f2f2;border-left:1px solid #dcdcdc;"></div>
<div style="left:655px;top:388px;width:2px;height:18px;background:#f2f2f2;border-left:1px solid #dcdcdc;"></div>
<div style="left:744px;top:388px;width:2px;height:18px;background:#f2f2f2;border-left:1px solid #dcdcdc;"></div>
<div style="left:857px;top:388px;width:2px;height:18px;background:#f2f2f2;border-left:1px solid #dcdcdc;"></div>
<div style="left:1023px;top:388px;width:2px;height:18px;background:#f2f2f2;border-left:1px solid #dcdcdc;"></div>
<div style="left:1069px;top:388px;width:2px;height:18px;background:#f2f2f2;border-left:1px solid #dcdcdc;"></div>
<div style="left:1119px;top:388px;width:2px;height:18px;background:#f2f2f2;border-left:1px solid #dcdcdc;"></div>
<div style="left:1241px;top:388px;width:2px;height:18px;background:#f2f2f2;border-left:1px solid #dcdcdc;"></div>
<div style="left:1337px;top:388px;width:2px;height:18px;background:#f2f2f2;border-left:1px solid #dcdcdc;"></div>
<span class="t" style="left:487px;top:393px;font-size:12px;line-height:12px;color:#111;letter-spacing:-0.1px;">Date</span>
<span class="t" style="left:593px;top:393px;font-size:12px;line-height:12px;color:#111;letter-spacing:-0.1px;">Voucher</span>
<span class="t" style="left:662px;top:393px;font-size:12px;line-height:12px;color:#111;letter-spacing:-0.1px;">Account type</span>
<span class="t" style="left:751px;top:393px;font-size:12px;line-height:12px;color:#111;letter-spacing:-0.1px;">Account</span>
<span class="t" style="left:864px;top:393px;font-size:12px;line-height:12px;color:#111;letter-spacing:-0.1px;">Description</span>
<span class="t" style="right:349px;top:393px;font-size:12px;line-height:12px;color:#111;letter-spacing:-0.1px;">Debit</span>
<span class="t" style="right:299px;top:393px;font-size:12px;line-height:12px;color:#111;letter-spacing:-0.1px;">Credit</span>
<span class="t" style="left:1126px;top:393px;font-size:12px;line-height:12px;color:#111;letter-spacing:-0.1px;">Offset account type</span>
<span class="t" style="left:1248px;top:393px;font-size:12px;line-height:12px;color:#111;letter-spacing:-0.1px;">Offset account</span>
<div style="left:1344px;top:393px;width:54px;height:12px;overflow:hidden;"><span class="t" style="left:0;top:0;font-size:12px;line-height:12px;color:#111">Use a deposit</span></div>
<div style="left:480px;top:427px;width:918px;height:21px;background:linear-gradient(180deg,#d6eefb,#b5def6);border-top:1px solid #98d0f0;"></div>
<div style="left:479px;top:388px;width:1px;height:204px;background:#dce8f6;"></div>
<div style="left:586px;top:406px;width:1px;height:186px;background:#dce8f6;"></div>
<div style="left:655px;top:406px;width:1px;height:186px;background:#dce8f6;"></div>
<div style="left:744px;top:406px;width:1px;height:186px;background:#dce8f6;"></div>
<div style="left:857px;top:406px;width:1px;height:186px;background:#dce8f6;"></div>
<div style="left:1023px;top:406px;width:1px;height:186px;background:#dce8f6;"></div>
<div style="left:1069px;top:406px;width:1px;height:186px;background:#dce8f6;"></div>
<div style="left:1119px;top:406px;width:1px;height:186px;background:#dce8f6;"></div>
<div style="left:1241px;top:406px;width:1px;height:186px;background:#dce8f6;"></div>
<div style="left:1337px;top:406px;width:1px;height:186px;background:#dce8f6;"></div>
<div style="left:480px;top:427px;width:918px;height:1px;background:#dbe6f3;"></div>
<div style="left:480px;top:448px;width:918px;height:1px;background:#dbe6f3;"></div>
<div style="left:480px;top:469px;width:918px;height:1px;background:#dbe6f3;"></div>
<span class="t" style="left:488px;top:411px;font-size:12px;line-height:12px;color:#111;letter-spacing:-0.1px;">5/5/2015</span>
<span class="t" style="left:593px;top:411px;font-size:12px;line-height:12px;color:#111;letter-spacing:-0.1px;">GNJL000...</span>
<span class="t" style="left:659.5px;top:411px;font-size:12px;line-height:12px;color:#111;letter-spacing:-0.1px;">Ledger</span>
<span class="t" style="left:751px;top:411px;font-size:12px;line-height:12px;color:#111;letter-spacing:-0.1px;">600120---007-</span>
<span class="t" style="left:864px;top:411px;font-size:12px;line-height:12px;color:#111;letter-spacing:-0.1px;">Line 1 Description</span>
<span class="t" style="right:349px;top:411px;font-size:12px;line-height:12px;color:#111;letter-spacing:-0.1px;">10.00</span>
<span class="t" style="left:1123px;top:411px;font-size:12px;line-height:12px;color:#111;letter-spacing:-0.1px;">Ledger</span>
<span class="t" style="left:1248px;top:411px;font-size:12px;line-height:12px;color:#111;letter-spacing:-0.1px;">600155---008-</span>
<div style="left:1386px;top:411px;width:12px;height:13px;border:1px solid #8e8f8f;border-right:none;background:#fff;"></div>
<span class="t" style="left:593px;top:432px;font-size:12px;line-height:12px;color:#111;letter-spacing:-0.1px;">GNJL000...</span>
<span class="t" style="left:659.5px;top:432px;font-size:12px;line-height:12px;color:#111;letter-spacing:-0.1px;">Vendor</span>
<span class="t" style="left:751px;top:432px;font-size:12px;line-height:12px;color:#111;letter-spacing:-0.1px;">DE-001</span>
<span class="t" style="left:864px;top:432px;font-size:12px;line-height:12px;color:#111;letter-spacing:-0.1px;">Line 2 Description</span>
<span class="t" style="right:349px;top:432px;font-size:12px;line-height:12px;color:#111;letter-spacing:-0.1px;">20.00</span>
<span class="t" style="left:1123px;top:432px;font-size:12px;line-height:12px;color:#111;letter-spacing:-0.1px;">Ledger</span>
<span class="t" style="left:1248px;top:432px;font-size:12px;line-height:12px;color:#111;letter-spacing:-0.1px;">600120---007-</span>
<div style="left:1386px;top:432px;width:12px;height:13px;border:1px solid #8e8f8f;border-right:none;background:#fff;"></div>
<span class="t" style="left:488px;top:453px;font-size:12px;line-height:12px;color:#111;letter-spacing:-0.1px;">7/7/2015</span>
<span class="t" style="left:593px;top:453px;font-size:12px;line-height:12px;color:#111;letter-spacing:-0.1px;">GNJL000...</span>
<span class="t" style="left:659.5px;top:453px;font-size:12px;line-height:12px;color:#111;letter-spacing:-0.1px;">Customer</span>
<span class="t" style="left:751px;top:453px;font-size:12px;line-height:12px;color:#111;letter-spacing:-0.1px;">DE-010</span>
<span class="t" style="left:864px;top:453px;font-size:12px;line-height:12px;color:#111;letter-spacing:-0.1px;">Line 3 Description</span>
<span class="t" style="right:349px;top:453px;font-size:12px;line-height:12px;color:#111;letter-spacing:-0.1px;">30.00</span>
<span class="t" style="left:1123px;top:453px;font-size:12px;line-height:12px;color:#111;letter-spacing:-0.1px;">Ledger</span>
<span class="t" style="left:1248px;top:453px;font-size:12px;line-height:12px;color:#111;letter-spacing:-0.1px;">600120---008-</span>
<div style="left:1386px;top:453px;width:12px;height:13px;border:1px solid #8e8f8f;border-right:none;background:#fff;"></div>
<div style="left:480px;top:428px;width:107px;height:20px;background:#fff;border:1px dotted #000;"></div>
<div style="left:488px;top:430px;width:47px;height:15px;background:#3399ff;"></div>
<span class="t" style="left:488px;top:432px;font-size:12px;line-height:12px;color:#fff;letter-spacing:-0.1px;">6/6/2015</span>
<svg style="left:567px;top:430px" width="16" height="15" viewBox="0 0 16 15"><rect x="0" y="2" width="16" height="13" fill="#5577b8"/><rect x="0" y="2" width="16" height="2.5" fill="#6a98e8"/><rect x="1.5" y="2.8" width="6" height="1" fill="#d8e6fa"/><rect x="1.5" y="5.0" width="1.8" height="1.8" fill="#fff"/><rect x="1.5" y="7.8" width="1.8" height="1.8" fill="#fff"/><rect x="1.5" y="10.6" width="1.8" height="1.8" fill="#fff"/><rect x="4.3" y="5.0" width="1.8" height="1.8" fill="#fff"/><rect x="4.3" y="7.8" width="1.8" height="1.8" fill="#fff"/><rect x="4.3" y="10.6" width="1.8" height="1.8" fill="#fff"/><rect x="7.1" y="5.0" width="1.8" height="1.8" fill="#fff"/><rect x="7.1" y="7.8" width="1.8" height="1.8" fill="#fff"/><rect x="7.1" y="10.6" width="1.8" height="1.8" fill="#fff"/><rect x="9.9" y="5.0" width="1.8" height="1.8" fill="#fff"/><rect x="9.9" y="7.8" width="1.8" height="1.8" fill="#fff"/><rect x="9.9" y="10.6" width="1.8" height="1.8" fill="#fff"/><rect x="12.7" y="5.0" width="1.8" height="1.8" fill="#fff"/><rect x="12.7" y="7.8" width="1.8" height="1.8" fill="#fff"/><rect x="12.7" y="10.6" width="1.8" height="1.8" fill="#fff"/><rect x="0" y="13.4" width="16" height="1.6" fill="#2a4a80"/><rect x="9.5" y="7.1" width="4.4" height="4.4" fill="#fff" stroke="#e2461a" stroke-width="1.5"/><circle cx="1.5" cy="1.3" r="0.9" fill="#222"/><circle cx="3.6" cy="1.3" r="0.9" fill="#222"/><circle cx="5.7" cy="1.3" r="0.9" fill="#222"/><circle cx="7.8" cy="1.3" r="0.9" fill="#222"/><circle cx="9.9" cy="1.3" r="0.9" fill="#222"/><circle cx="12.0" cy="1.3" r="0.9" fill="#222"/><circle cx="14.1" cy="1.3" r="0.9" fill="#222"/></svg>
<div style="left:463px;top:592px;width:1px;height:1px;"></div>
<div style="left:463px;top:592px;width:935px;height:17px;background:#fff;border:1px solid #c4c4c4;"></div>
<div style="left:479px;top:592px;width:602px;height:17px;background:#dcdcdc;border:1px solid #a4a4a4;"></div>
<div style="left:1381px;top:592px;width:1px;height:17px;background:#c4c4c4;"></div>
<svg style="left:468px;top:596px" width="7" height="9" viewBox="0 0 7 9"><path d="M5.2 0.8L1.6 4.5L5.2 8.2" stroke="#555" stroke-width="1.6" fill="none"/></svg>
<svg style="left:1386px;top:596px" width="7" height="9" viewBox="0 0 7 9"><path d="M1.8 0.8L5.4 4.5L1.8 8.2" stroke="#555" stroke-width="1.6" fill="none"/></svg>
<div style="left:776px;top:597px;width:2px;height:7px;background:#646464;"></div>
<div style="left:779px;top:597px;width:2px;height:7px;background:#646464;"></div>
<div style="left:782px;top:597px;width:2px;height:7px;background:#646464;"></div>
<span class="t" style="left:461.5px;top:618px;font-size:12px;line-height:12px;color:#333;transform:scaleX(0.9612);transform-origin:left top;">Currency:</span>
<span class="t" style="left:461.5px;top:644px;font-size:12px;line-height:12px;color:#333;transform:scaleX(0.9344);transform-origin:left top;">Sales tax group:</span>
<span class="t" style="left:461.5px;top:670px;font-size:12px;line-height:12px;color:#333;transform:scaleX(0.9610);transform-origin:left top;">Item sales tax group:</span>
<span class="t" style="left:461.5px;top:696px;font-size:12px;line-height:12px;color:#333;transform:scaleX(0.9640);transform-origin:left top;">Calculated sales tax amount:</span>
<span class="t" style="left:461.5px;top:722px;font-size:12px;line-height:12px;color:#333;transform:scaleX(0.9680);transform-origin:left top;">Actual sales tax amount:</span>
<div style="left:615px;top:613px;width:75px;height:24px;background:#fff;border:1px solid #7a7a7a;"></div>
<div style="left:672px;top:615px;width:1px;height:20px;background:#444;"></div>
<svg style="left:677px;top:622px" width="8" height="6"><path d="M0.8 0.8L3.9 4.3L7 0.8" stroke="#3a3a3a" stroke-width="1.7" fill="none"/></svg>
<span class="t" style="left:621px;top:618px;font-size:12px;line-height:12px;color:#000;letter-spacing:-0.1px;">USD</span>
<div style="left:615px;top:639px;width:87px;height:24px;background:#ffff55;border:1px solid #b8b82a;"></div>
<div style="left:684px;top:641px;width:1px;height:20px;background:#444;"></div>
<svg style="left:689px;top:648px" width="8" height="6"><path d="M0.8 0.8L3.9 4.3L7 0.8" stroke="#3a3a3a" stroke-width="1.7" fill="none"/></svg>
<span class="t" style="left:621px;top:644px;font-size:12px;line-height:12px;color:#000;letter-spacing:-0.1px;">AP-DOM</span>
<div style="left:615px;top:665px;width:87px;height:24px;background:#ffff55;border:1px solid #b8b82a;"></div>
<div style="left:684px;top:667px;width:1px;height:20px;background:#444;"></div>
<svg style="left:689px;top:674px" width="8" height="6"><path d="M0.8 0.8L3.9 4.3L7 0.8" stroke="#3a3a3a" stroke-width="1.7" fill="none"/></svg>
<span class="t" style="left:621px;top:670px;font-size:12px;line-height:12px;color:#000;letter-spacing:-0.1px;">FULL</span>
<div style="left:615px;top:691px;width:86px;height:24px;background:#f0f0f0;border:1px solid #7a7a7a;"></div>
<span class="t" style="right:718px;top:696px;font-size:12px;line-height:12px;color:#000;letter-spacing:-0.1px;">3.19</span>
<div style="left:615px;top:717px;width:86px;height:24px;background:#fff;border:1px solid #7a7a7a;"></div>
<span class="t" style="right:718px;top:722px;font-size:12px;line-height:12px;color:#000;letter-spacing:-0.1px;">3.19</span>
<span class="t" style="left:714.2px;top:618px;font-size:12px;line-height:12px;color:#6d6d6d;transform:scaleX(0.9807);transform-origin:left top;">Settlement type:</span>
<span class="t" style="left:714.2px;top:644px;font-size:12px;line-height:12px;color:#6d6d6d;transform:scaleX(0.9998);transform-origin:left top;">Account name:</span>
<span class="t" style="left:714.2px;top:670px;font-size:12px;line-height:12px;color:#6d6d6d;transform:scaleX(0.9931);transform-origin:left top;">Offset account name:</span>
<div style="left:832px;top:613px;width:150px;height:24px;background:#f0f0f0;border:1px solid #ababab;"></div>
<span class="t" style="left:837px;top:619px;font-size:12px;line-height:12px;color:#6d6d6d;letter-spacing:-0.1px;">None</span>
<div style="left:832px;top:639px;width:134px;height:24px;background:#f0f0f0;border:1px solid #ababab;"></div>
<span class="t" style="left:838px;top:644px;font-size:12px;line-height:12px;color:#6d6d6d;letter-spacing:-0.1px;">Opal Audio</span>
<div style="left:832px;top:665px;width:134px;height:24px;background:#f0f0f0;border:1px solid #ababab;"></div>
<span class="t" style="left:838px;top:670px;font-size:12px;line-height:12px;color:#6d6d6d;letter-spacing:-0.1px;">Freight/Transportation</span>
<span class="t" style="left:995px;top:618px;font-size:12px;line-height:12px;color:#333;transform:scaleX(1.0178);transform-origin:left top;">Withholding tax group:</span>
<span class="t" style="left:995px;top:644px;font-size:12px;line-height:12px;color:#333;transform:scaleX(0.9118);transform-origin:left top;">Release date:</span>
<div style="left:1121px;top:613px;width:87px;height:24px;background:#fff;border:1px solid #7a7a7a;"></div>
<div style="left:1190px;top:615px;width:1px;height:20px;background:#444;"></div>
<svg style="left:1195px;top:622px" width="8" height="6"><path d="M0.8 0.8L3.9 4.3L7 0.8" stroke="#3a3a3a" stroke-width="1.7" fill="none"/></svg>
<div style="left:1121px;top:639px;width:96px;height:23px;background:#fff;border:1px solid #ababab;"></div>
<svg style="left:1193px;top:642px" width="16" height="15" viewBox="0 0 16 15"><rect x="0" y="2" width="16" height="13" fill="#5577b8"/><rect x="0" y="2" width="16" height="2.5" fill="#6a98e8"/><rect x="1.5" y="2.8" width="6" height="1" fill="#d8e6fa"/><rect x="1.5" y="5.0" width="1.8" height="1.8" fill="#fff"/><rect x="1.5" y="7.8" width="1.8" height="1.8" fill="#fff"/><rect x="1.5" y="10.6" width="1.8" height="1.8" fill="#fff"/><rect x="4.3" y="5.0" width="1.8" height="1.8" fill="#fff"/><rect x="4.3" y="7.8" width="1.8" height="1.8" fill="#fff"/><rect x="4.3" y="10.6" width="1.8" height="1.8" fill="#fff"/><rect x="7.1" y="5.0" width="1.8" height="1.8" fill="#fff"/><rect x="7.1" y="7.8" width="1.8" height="1.8" fill="#fff"/><rect x="7.1" y="10.6" width="1.8" height="1.8" fill="#fff"/><rect x="9.9" y="5.0" width="1.8" height="1.8" fill="#fff"/><rect x="9.9" y="7.8" width="1.8" height="1.8" fill="#fff"/><rect x="9.9" y="10.6" width="1.8" height="1.8" fill="#fff"/><rect x="12.7" y="5.0" width="1.8" height="1.8" fill="#fff"/><rect x="12.7" y="7.8" width="1.8" height="1.8" fill="#fff"/><rect x="12.7" y="10.6" width="1.8" height="1.8" fill="#fff"/><rect x="0" y="13.4" width="16" height="1.6" fill="#2a4a80"/><rect x="9.5" y="7.1" width="4.4" height="4.4" fill="#fff" stroke="#e2461a" stroke-width="1.5"/><circle cx="1.5" cy="1.3" r="0.9" fill="#222"/><circle cx="3.6" cy="1.3" r="0.9" fill="#222"/><circle cx="5.7" cy="1.3" r="0.9" fill="#222"/><circle cx="7.8" cy="1.3" r="0.9" fill="#222"/><circle cx="9.9" cy="1.3" r="0.9" fill="#222"/><circle cx="12.0" cy="1.3" r="0.9" fill="#222"/><circle cx="14.1" cy="1.3" r="0.9" fill="#222"/></svg>
<div style="left:449px;top:752px;width:963px;height:31px;background:#dfe7ef;"></div>
<div style="left:449px;top:752px;width:963px;height:1px;background:#8a9097;"></div>
<div style="left:449px;top:753px;width:963px;height:2px;background:linear-gradient(180deg,#b8c0c8,#dfe7ef);"></div>
<svg style="left:465px;top:763px" width="13" height="13"><rect x="0" y="0" width="2.5" height="13" fill="#1e78e0"/><path d="M12 0V13L3 6.5Z" fill="#1e78e0"/></svg>
<svg style="left:491px;top:763px" width="13" height="13"><path d="M12 0V13L1 6.5Z" fill="#1e78e0"/></svg>
<svg style="left:542px;top:763px" width="13" height="13"><path d="M1 0V13L12 6.5Z" fill="#1e78e0"/></svg>
<svg style="left:566px;top:763px" width="13" height="13"><path d="M0 0V13L9 6.5Z" fill="#1e78e0"/><rect x="10.5" y="0" width="2.5" height="13" fill="#1e78e0"/></svg>
<svg style="left:517px;top:763px" width="13" height="13" viewBox="0 0 13 13"><rect x="0.0" y="0.0" width="3.3" height="2.2" fill="#a6c4ec"/><rect x="0.0" y="3.2" width="3.3" height="2.2" fill="#a6c4ec"/><rect x="0.0" y="6.4" width="3.3" height="2.2" fill="#a6c4ec"/><rect x="0.0" y="9.6" width="3.3" height="2.2" fill="#a6c4ec"/><rect x="4.3" y="0.0" width="3.3" height="2.2" fill="#a6c4ec"/><rect x="4.3" y="3.2" width="3.3" height="2.2" fill="#a6c4ec"/><rect x="4.3" y="6.4" width="3.3" height="2.2" fill="#a6c4ec"/><rect x="4.3" y="9.6" width="3.3" height="2.2" fill="#a6c4ec"/><rect x="8.6" y="0.0" width="3.3" height="2.2" fill="#a6c4ec"/><rect x="8.6" y="3.2" width="3.3" height="2.2" fill="#a6c4ec"/><rect x="8.6" y="6.4" width="3.3" height="2.2" fill="#a6c4ec"/><rect x="8.6" y="9.6" width="3.3" height="2.2" fill="#a6c4ec"/></svg>
<div style="left:590px;top:758px;width:1px;height:22px;background:linear-gradient(180deg,rgba(30,60,110,0) 0%,#1e3c6e 40%,#1e3c6e 60%,rgba(30,60,110,0) 100%);"></div>
<div style="left:597px;top:757px;width:24px;height:24px;background:linear-gradient(180deg,#fcdc72 0%,#fee070 50%,#ffe868 100%);border:1px solid #d4982a;border-radius:3px;"></div>
<svg style="left:600px;top:760px" width="18" height="18" viewBox="0 0 18 18"><path d="M4.2 13.8L13.6 4.4" stroke="#3c3020" stroke-width="3.4" stroke-linecap="butt"/><path d="M4.2 13.8L13.6 4.4" stroke="#f8e6a8" stroke-width="1.8"/><path d="M1.4 16.6L2.9 12.4L5.6 15.1Z" fill="#e8c8a0" stroke="#3c3020" stroke-width="0.7" stroke-linejoin="round"/><path d="M1.4 16.6L1.9 15L3 16.1Z" fill="#222"/><path d="M12.2 5.8L14.2 3.8" stroke="#2a8a4a" stroke-width="3.4"/><path d="M13.6 4.4L14.8 3.2C15.3 2.7 15.9 2.7 16.3 3.1C16.7 3.5 16.7 4.1 16.2 4.6L15 5.8Z" fill="#e05858" stroke="#8a3030" stroke-width="0.6"/><path d="M13 3.6L15.8 6.4" stroke="#e05858" stroke-width="2.2"/></svg>
<div style="left:626px;top:758px;width:1px;height:22px;background:linear-gradient(180deg,rgba(30,60,110,0) 0%,#1e3c6e 40%,#1e3c6e 60%,rgba(30,60,110,0) 100%);"></div>
<svg style="left:638px;top:761px" width="14" height="17" viewBox="0 0 14 17"><path d="M0.5 1.5H9.5L13.5 5.5V16.5H0.5Z" fill="#ffffff" stroke="#7c7c7c" stroke-width="1"/><path d="M9.5 1.5V5.5H13.5" fill="#e8e8e8" stroke="#7c7c7c" stroke-width="0.8"/><path d="M2.2 10V3.2C2.2 1.7 3 0.8 4.4 0.8C5.8 0.8 6.6 1.7 6.6 3.2V8.4C6.6 9.3 6.1 9.8 5.3 9.8C4.5 9.8 4.1 9.3 4.1 8.4V3.6" fill="none" stroke="#7c7c7c" stroke-width="1.2"/></svg>
<div style="left:662px;top:758px;width:1px;height:22px;background:linear-gradient(180deg,rgba(30,60,110,0) 0%,#1e3c6e 40%,#1e3c6e 60%,rgba(30,60,110,0) 100%);"></div>
<span class="t" style="left:669.5px;top:764px;font-size:12px;line-height:12px;color:#333;transform:scaleX(0.9822);transform-origin:left top;">Posting date</span>
<div style="left:882px;top:758px;width:1px;height:22px;background:linear-gradient(180deg,rgba(30,60,110,0) 0%,#1e3c6e 40%,#1e3c6e 60%,rgba(30,60,110,0) 100%);"></div>
<div style="left:932px;top:758px;width:1px;height:22px;background:linear-gradient(180deg,rgba(30,60,110,0) 0%,#1e3c6e 40%,#1e3c6e 60%,rgba(30,60,110,0) 100%);"></div>
<div style="left:965px;top:758px;width:1px;height:22px;background:linear-gradient(180deg,rgba(30,60,110,0) 0%,#1e3c6e 40%,#1e3c6e 60%,rgba(30,60,110,0) 100%);"></div>
<div style="left:1036px;top:758px;width:1px;height:22px;background:linear-gradient(180deg,rgba(30,60,110,0) 0%,#1e3c6e 40%,#1e3c6e 60%,rgba(30,60,110,0) 100%);"></div>
<div style="left:1064px;top:758px;width:1px;height:22px;background:linear-gradient(180deg,rgba(30,60,110,0) 0%,#1e3c6e 40%,#1e3c6e 60%,rgba(30,60,110,0) 100%);"></div>
<div style="left:1104px;top:758px;width:1px;height:22px;background:linear-gradient(180deg,rgba(30,60,110,0) 0%,#1e3c6e 40%,#1e3c6e 60%,rgba(30,60,110,0) 100%);"></div>
<div style="left:1144px;top:758px;width:1px;height:22px;background:linear-gradient(180deg,rgba(30,60,110,0) 0%,#1e3c6e 40%,#1e3c6e 60%,rgba(30,60,110,0) 100%);"></div>
<div style="left:1190px;top:758px;width:1px;height:22px;background:linear-gradient(180deg,rgba(30,60,110,0) 0%,#1e3c6e 40%,#1e3c6e 60%,rgba(30,60,110,0) 100%);"></div>
<div style="left:1250px;top:758px;width:1px;height:22px;background:linear-gradient(180deg,rgba(30,60,110,0) 0%,#1e3c6e 40%,#1e3c6e 60%,rgba(30,60,110,0) 100%);"></div>
<svg style="left:892px;top:761px" width="17" height="16" viewBox="0 0 17 16"><defs><linearGradient id="bg892" x1="0" x2="1"><stop offset="0" stop-color="#e8a010"/><stop offset="0.3" stop-color="#ffe48a"/><stop offset="0.55" stop-color="#f6b810"/><stop offset="1" stop-color="#a85a00"/></linearGradient></defs><circle cx="8.2" cy="14.2" r="1.7" fill="#e8a010"/><path d="M8.2 0.4C9 0.4 9.2 1 9.2 1.3C11.6 1.9 12.6 4 12.6 6.8V10.2C12.6 11.2 13.6 11.9 15.8 12.4C16.3 12.6 16.2 13.6 15.6 13.6H0.8C0.2 13.6 0.1 12.6 0.6 12.4C2.8 11.9 3.8 11.2 3.8 10.2V6.8C3.8 4 4.8 1.9 7.2 1.3C7.2 1 7.4 0.4 8.2 0.4Z" fill="url(#bg892)"/><path d="M0.8 12.4H15.6V13.6H0.8Z" fill="#e8a418" opacity="0.8"/></svg>
<span class="t" style="left:909.5px;top:764px;font-size:12px;line-height:12px;color:#333;transform:scaleX(0.8860);transform-origin:left top;">(0)</span>
<span class="t" style="left:939.3px;top:764px;font-size:12px;line-height:12px;color:#333;transform:scaleX(0.8286);transform-origin:left top;">EUR</span>
<span class="t" style="left:972px;top:764px;font-size:12px;line-height:12px;color:#333;transform:scaleX(0.9615);transform-origin:left top;">USR Model</span>
<span class="t" style="left:1043px;top:764px;font-size:12px;line-height:12px;color:#333;transform:scaleX(0.9597);transform-origin:left top;">usr</span>
<span class="t" style="left:1071px;top:764px;font-size:12px;line-height:12px;color:#333;transform:scaleX(1.0498);transform-origin:left top;">demf</span>
<span class="t" style="left:1111px;top:764px;font-size:12px;line-height:12px;color:#333;transform:scaleX(1.0234);transform-origin:left top;">initial</span>
<span class="t" style="left:1151px;top:764px;font-size:12px;line-height:12px;color:#333;transform:scaleX(1.0096);transform-origin:left top;">admin</span>
<span class="t" style="left:1197px;top:764px;font-size:12px;line-height:12px;color:#333;transform:scaleX(1.0067);transform-origin:left top;">8/7/2015</span>
<span class="t" style="left:1256px;top:764px;font-size:12px;line-height:12px;color:#333;transform:scaleX(0.9797);transform-origin:left top;">09:10 pm</span>
<div style="left:1321px;top:757px;width:74px;height:24px;background:#dddddd;border:1px solid #707070;"></div>
<span class="t" style="left:1343px;top:764px;font-size:12px;line-height:12px;color:#111;letter-spacing:-0.1px;">Close</span>
<div style="left:1408px;top:770px;width:2px;height:2px;background:#a8aeb4;"></div>
<div style="left:1405px;top:773px;width:2px;height:2px;background:#a8aeb4;"></div>
<div style="left:1408px;top:773px;width:2px;height:2px;background:#a8aeb4;"></div>
<div style="left:1402px;top:776px;width:2px;height:2px;background:#a8aeb4;"></div>
<div style="left:1405px;top:776px;width:2px;height:2px;background:#a8aeb4;"></div>
<div style="left:1408px;top:776px;width:2px;height:2px;background:#a8aeb4;"></div>
<div style="left:1399px;top:779px;width:2px;height:2px;background:#a8aeb4;"></div>
<div style="left:1402px;top:779px;width:2px;height:2px;background:#a8aeb4;"></div>
<div style="left:1405px;top:779px;width:2px;height:2px;background:#a8aeb4;"></div>
<div style="left:1408px;top:779px;width:2px;height:2px;background:#a8aeb4;"></div>
</body></html>
